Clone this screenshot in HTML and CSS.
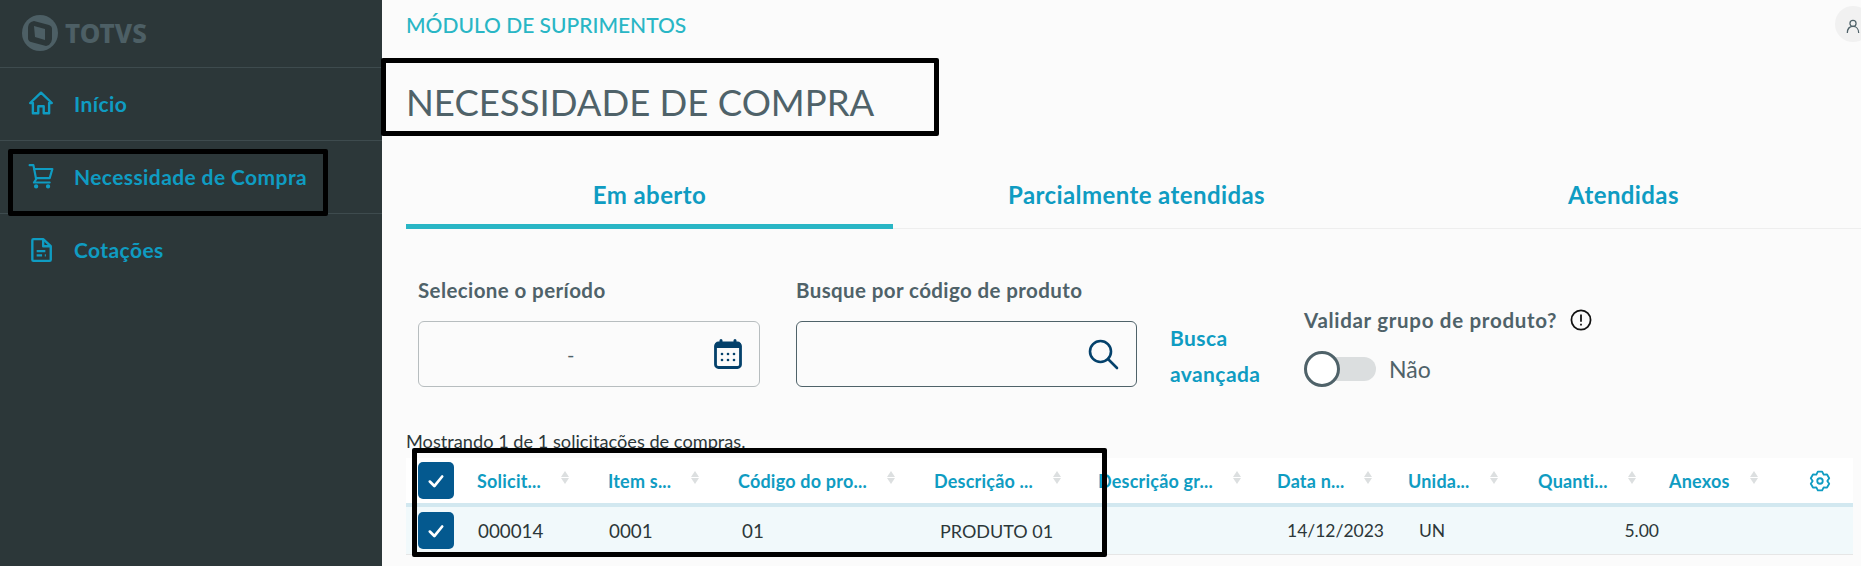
FILE: index.html
```html
<!DOCTYPE html>
<html lang="pt-BR">
<head>
  <meta charset="UTF-8" />
  <title>Necessidade de Compra</title>
  <link rel="stylesheet" href="styles.css">
</head>
<body>
  <div class="app">
    <aside class="sidebar">
      <div class="logo">
        <svg class="logo-mark" viewBox="0 0 36 36" width="36" height="36">
          <circle cx="18" cy="18" r="18" fill="#4d5f65"/>
          <path d="M12 6 L27 10 Q30 11 30 14 V24 Q30 27 27 30 L24 31 L9 27 Q6 26 6 23 V13 Q6 9 9 7 Z" fill="#2c3739"/>
          <path d="M12 11 L23 14 V25 L13 22 Z" fill="#4d5f65"/>
        </svg>
        <span class="logo-text">TOTVS</span>
      </div>
      <a class="menu-item">
        <svg viewBox="0 0 24 24" width="26" height="26" fill="none" stroke="#0f9cc2" stroke-width="2.200" stroke-linejoin="round"><path d="M2 12 L12 2.500 L22 12 H19.500 V21.500 H14.500 V15 H9.500 V21.500 H4.500 V12 Z"/></svg>
        <span>Início</span>
      </a>
      <a class="menu-item">
        <svg viewBox="0 0 24 24" width="26" height="26" fill="none" stroke="#0f9cc2" stroke-width="2" stroke-linecap="round" stroke-linejoin="round"><path d="M1.500 2 H5 L7.500 15 L5.500 18 H20"/><path d="M5.500 5.500 H22.500 L20 14 H7.500"/><circle cx="7.500" cy="21.500" r="1" fill="#0f9cc2"/><circle cx="18.500" cy="21.500" r="1" fill="#0f9cc2"/></svg>
        <span>Necessidade de Compra</span>
      </a>
      <a class="menu-item">
        <svg viewBox="0 0 24 24" width="26" height="26" fill="none" stroke="#0f9cc2" stroke-width="2.200" stroke-linejoin="round"><path d="M4 3 a1 1 0 0 1 1 -1 H14 L21 8.500 V21 a1 1 0 0 1 -1 1 H5 a1 1 0 0 1 -1 -1 Z"/><path d="M14 2 V8.500 H21"/><path d="M8 13 H16 M8 17 H13 M15.500 17 H16.500"/></svg>
        <span>Cotações</span>
      </a>
    </aside>

    <main class="content">
      <div class="topbar">
        <span class="module">MÓDULO DE SUPRIMENTOS</span>
        <div class="avatar">
          <svg viewBox="0 0 16 16" width="14" height="14" fill="none" stroke="#4f6269" stroke-width="1.400"><circle cx="8" cy="5" r="3.500"/><path d="M1.500 16 C1.500 11 4.500 8.500 8 8.500 C11.500 8.500 14.500 11 14.500 16"/></svg>
        </div>
      </div>
      <h1 class="title">NECESSIDADE DE COMPRA</h1>

      <div class="tabs">
        <div class="tab active">Em aberto</div>
        <div class="tab">Parcialmente atendidas</div>
        <div class="tab">Atendidas</div>
      </div>

      <div class="filters">
        <div class="field period">
          <label>Selecione o período</label>
          <div class="input">
            <span class="dash">-</span>
            <svg viewBox="0 0 28 30" width="28" height="30"><path d="M7 1.500 V5 M21 1.500 V5" stroke="#04416b" stroke-width="3" stroke-linecap="round"/><rect x="1.500" y="4" width="25" height="24.500" rx="3" fill="none" stroke="#04416b" stroke-width="2.800"/><rect x="1.500" y="4" width="25" height="5" fill="#04416b"/><g fill="#04416b"><circle cx="8" cy="15" r="1.300"/><circle cx="14" cy="15" r="1.300"/><circle cx="20" cy="15" r="1.300"/><circle cx="8" cy="21" r="1.300"/><circle cx="14" cy="21" r="1.300"/><circle cx="20" cy="21" r="1.300"/></g></svg>
          </div>
        </div>
        <div class="field search">
          <label>Busque por código de produto</label>
          <div class="input focus">
            <svg viewBox="0 0 32 32" width="32" height="32" fill="none" stroke="#04416b" stroke-width="2.600" stroke-linecap="round"><circle cx="13.500" cy="13.500" r="10.500"/><path d="M21 21 L30 30"/></svg>
          </div>
        </div>
        <a class="adv-link">Busca avançada</a>
        <div class="validate">
          <div class="validate-label">
            Validar grupo de produto?
            <svg viewBox="0 0 20 20" width="22" height="22" fill="none" stroke="#111" stroke-width="1.600"><circle cx="10" cy="10" r="8.700"/><path d="M10 5 V11.500 M10 13.500 V15"/></svg>
          </div>
          <div class="switch-row">
            <div class="switch"><div class="knob"></div></div>
            <span>Não</span>
          </div>
        </div>
      </div>

      <p class="count">Mostrando 1 de 1 solicitações de compras.</p>

      <div class="table">
        <div class="row head">
          <div class="cell"><span class="check"><svg viewBox="0 0 16 16" width="18" height="18" fill="none" stroke="#fff" stroke-width="2.400" stroke-linecap="round" stroke-linejoin="round"><path d="M2.500 8.500 L6.500 12.500 L13.500 4"/></svg></span></div>
          <div class="cell th">Solicit...<span class="sort"></span></div>
          <div class="cell th">Item s...<span class="sort"></span></div>
          <div class="cell th">Código do pro...<span class="sort"></span></div>
          <div class="cell th">Descrição ...<span class="sort"></span></div>
          <div class="cell th">Descrição gr...<span class="sort"></span></div>
          <div class="cell th">Data n...<span class="sort"></span></div>
          <div class="cell th">Unida...<span class="sort"></span></div>
          <div class="cell th">Quanti...<span class="sort"></span></div>
          <div class="cell th">Anexos<span class="sort"></span></div>
          <div class="cell gear">
            <svg viewBox="0 0 24 24" width="22" height="22" fill="none" stroke="#0f9cc2" stroke-width="2" stroke-linejoin="round"><circle cx="12" cy="12" r="3"/><path d="M9.640 1.770 H14.360 L16 5.070 L19.680 4.840 L22.040 8.930 L20 12 L22.040 15.070 L19.680 19.160 L16 18.930 L14.360 22.230 H9.640 L8 18.930 L4.320 19.160 L1.960 15.070 L4 12 L1.960 8.930 L4.320 4.840 L8 5.070 Z"/></svg>
          </div>
        </div>
        <div class="row body">
          <div class="cell"><span class="check"><svg viewBox="0 0 16 16" width="18" height="18" fill="none" stroke="#fff" stroke-width="2.400" stroke-linecap="round" stroke-linejoin="round"><path d="M2.500 8.500 L6.500 12.500 L13.500 4"/></svg></span></div>
          <div class="cell td">000014</div>
          <div class="cell td">0001</div>
          <div class="cell td">01</div>
          <div class="cell td">PRODUTO 01</div>
          <div class="cell td"></div>
          <div class="cell td narrow">14/12/2023</div>
          <div class="cell td narrow">UN</div>
          <div class="cell td narrow num">5.00</div>
          <div class="cell td"></div>
          <div class="cell"></div>
        </div>
      </div>
    </main>
  </div>

  <!-- caixas pretas desenhadas por cima da captura -->
  <div class="mark mark-menu"></div>
  <div class="mark mark-title"></div>
  <div class="mark mark-table"></div>
</body>
</html>
```

FILE: styles.css
```css
* { box-sizing: border-box; }
html, body { height: 100%; }
body {
  margin: 0;
  font-family: "Lato", "Open Sans", sans-serif;
  background: #fbfbfb;
  color: #4f6269;
  overflow: hidden;
}
.app {
  display: flex;
  height: 566px;
}
.sidebar {
  width: 382px;
  flex-shrink: 0;
  background: #2c3739;
}
.logo {
  height: 68px;
  padding-left: 22px;
  padding-bottom: 2px;
  display: flex;
  align-items: center;
  gap: 7px;
  border-bottom: 1px solid #3e4b4e;
}
.logo-text {
  font-family: "Noto Sans", sans-serif;
  font-size: 26px;
  font-weight: 800;
  color: #4d5f65;
}
.menu-item {
  height: 73px;
  padding-left: 28px;
  padding-bottom: 2px;
  display: flex;
  align-items: center;
  gap: 20px;
  color: #0f9cc2;
  font-size: 21px;
  font-weight: 700;
  letter-spacing: 0.4px;
  border-bottom: 1px solid #3e4b4e;
}
.menu-item:last-child { border-bottom: none; }

.content {
  flex: 1;
  min-width: 0;
  padding-left: 24px;
}
.topbar {
  height: 48px;
  display: flex;
  align-items: center;
  justify-content: space-between;
}
.module {
  font-size: 21px;
  font-weight: 500;
  color: #29b6c5;
}
.avatar {
  width: 36px;
  height: 36px;
  border-radius: 50%;
  background: #f1f1f1;
  margin-right: -10px;
  padding: 11px 0 0 11px;
}
.title {
  margin: 24px 0 0;
  height: 60px;
  line-height: 60px;
  font-size: 36.500px;
  font-weight: 400;
  color: #4f6269;
}
.tabs {
  display: flex;
  margin: 33px -6px 0 0;
  height: 64px;
  border-bottom: 1px solid #eee;
}
.tab {
  flex: 1;
  text-align: center;
  font-size: 24px;
  font-weight: 700;
  letter-spacing: 0.4px;
  color: #0f9cc2;
  padding-top: 15px;
}
.tab.active {
  border-bottom: 5px solid #29b6c5;
  height: 64px;
}
.filters {
  display: flex;
  margin-top: 49px;
  padding-left: 12px;
  height: 154px;
}
.field label {
  display: block;
  font-size: 20.500px;
  font-weight: 700;
  letter-spacing: 0.4px;
  height: 43px;
}
.period { width: 342px; margin-right: 36px; }
.search { width: 341px; margin-right: 33px; }
.input {
  height: 66px;
  background: #fbfbfb;
  border: 1px solid #b7bdbf;
  border-radius: 6px;
  display: flex;
  align-items: center;
  justify-content: flex-end;
  padding-right: 17px;
  position: relative;
}
.input.focus { border-color: #4f6269; }
.dash {
  position: absolute;
  left: 148px;
  font-size: 20px;
}
.adv-link {
  width: 112px;
  margin: 42px 0 0;
  color: #0f9cc2;
  font-size: 21px;
  font-weight: 700;
  letter-spacing: 0.4px;
  line-height: 36px;
}
.validate {
  margin-left: 22px;
  margin-top: 26px;
}
.validate-label {
  display: flex;
  align-items: center;
  gap: 13px;
  font-size: 20.500px;
  font-weight: 700;
  letter-spacing: 0.7px;
  height: 32px;
}
.switch-row {
  display: flex;
  align-items: center;
  gap: 13px;
  margin-top: 19px;
  font-size: 23px;
}
.switch {
  width: 72px;
  height: 24px;
  border-radius: 12px;
  background: #dbdedf;
  position: relative;
}
.knob {
  position: absolute;
  left: 0;
  top: -6px;
  width: 36px;
  height: 36px;
  border-radius: 50%;
  background: #fff;
  border: 3.500px solid #4f6269;
}
.count {
  margin: -1px 0 0;
  height: 21px;
  line-height: 21px;
  font-size: 18.200px;
  color: #2c3739;
}
.table { margin: 6px 8px 0 0; }
.row {
  display: grid;
  grid-template-columns: 71px 131px 130px 196px 164px 179px 131px 130px 131px 140px 1fr;
  align-items: center;
}
.row.head {
  height: 49px;
  background: #fff;
  border-bottom: 4px solid #d2e8f0;
}
.row.body {
  height: 48px;
  background: #f1f9fb;
  border-bottom: 1px solid #e6e6e6;
}
.cell { white-space: nowrap; }
.gear { display: flex; }
.check {
  display: flex;
  align-items: center;
  justify-content: center;
  width: 36px;
  height: 37px;
  margin-left: 12px;
  border-radius: 5px;
  background: #04598f;
}
.th {
  display: flex;
  align-items: center;
  color: #0f9cc2;
  font-size: 18px;
  font-weight: 700;
  letter-spacing: 0.2px;
}
.sort {
  width: 8px;
  height: 13px;
  margin: -6px 0 0 20px;
  display: flex;
  flex-direction: column;
  justify-content: space-between;
}
.sort::before, .sort::after {
  content: "";
  border-left: 4px solid transparent;
  border-right: 4px solid transparent;
}
.sort::before { border-bottom: 6px solid #dcdfe0; }
.sort::after { border-top: 6px solid #dcdfe0; }
.td {
  font-size: 18.800px;
  color: #2c3739;
  padding-left: 1px;
}
.td:nth-child(4) { padding-left: 4px; }
.td:nth-child(5) { padding-left: 6px; font-size: 18px; }
.td.narrow { font-size: 17.500px; }
.td:nth-child(7) { padding-left: 10px; }
.td:nth-child(8) { padding-left: 11px; }
.num { text-align: right; padding-right: 10px; }

/* marcas */
.mark {
  position: absolute;
  border: 5px solid #000;
  border-radius: 2px;
}
.mark-menu { left: 8px; top: 149px; width: 320px; height: 67px; }
.mark-title { left: 381px; top: 58px; width: 558px; height: 78px; }
.mark-table { left: 412px; top: 448px; width: 695px; height: 109px; }
```
